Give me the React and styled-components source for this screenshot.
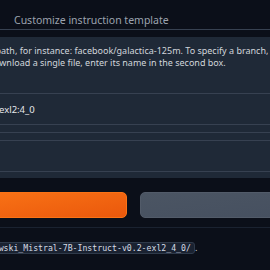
import React from 'react';
import styled, { createGlobalStyle } from 'styled-components';

const GlobalStyle = createGlobalStyle`
  html, body {
    margin: 0;
    padding: 0;
    background: #0b0f19;
  }
  body {
    font-family: "Noto Sans", "DejaVu Sans", sans-serif;
    overflow: hidden;
  }
`;

const Page = styled.div`
  width: 270px;
  height: 270px;
  overflow: hidden;
  background: #0b0f19;
`;

const TabBar = styled.div`
  height: 29px;
  display: flex;
  align-items: flex-end;
  border-bottom: 1px solid #374151;
`;

const Tab = styled.div`
  padding: 0 14px 2px;
  font-size: 10.5px;
  line-height: 14px;
  color: #9ca3af;
  white-space: nowrap;
`;

const Panel = styled.div`
  margin-top: 7px;
  height: 141px;
  box-sizing: border-box;
  padding: 8px 0 6px;
  background: #1f2937;
  display: flex;
  flex-direction: column;
`;

const Hint = styled.div`
  font-size: 9px;
  line-height: 12px;
  color: #d1d5db;
`;

const HintLine = styled.div`
  white-space: nowrap;
  margin-left: ${(p) => p.$shift || 0}px;
`;

const TextBox = styled.div`
  margin-top: ${(p) => p.$gap || 0}px;
  height: 32px;
  box-sizing: border-box;
  border: solid #374151;
  border-width: 1px 0;
  display: flex;
  align-items: center;
  font-size: 9.5px;
  color: #e5e7eb;
  white-space: nowrap;
`;

const Value = styled.span`
  margin-left: -1px;
`;

const Rule = styled.div`
  margin-top: ${(p) => p.$gap || 0}px;
  height: 1px;
  background: ${(p) => p.$color || '#374151'};
`;

const ButtonRow = styled.div`
  margin: 14px -20px 0 -23px;
  display: grid;
  grid-template-columns: 1fr 1fr;
  gap: 13px;
`;

const Button = styled.button`
  height: 26px;
  border-radius: 5px;
  border: 1px solid ${(p) => (p.$primary ? '#f97316' : '#525b69')};
  background: ${(p) =>
    p.$primary
      ? 'linear-gradient(to bottom right, #f97316, #ea580c)'
      : 'linear-gradient(to bottom right, #4b5563, #465060)'};
  padding: 0;
`;

const Note = styled.div`
  margin: 13px 0 0 -30px;
  display: flex;
  align-items: baseline;
  white-space: nowrap;
  font-size: 9px;
  color: #d1d5db;
`;

const Code = styled.code`
  display: inline-block;
  font-family: "DejaVu Sans Mono", "Liberation Mono", monospace;
  font-size: 8.2px;
  line-height: 10px;
  padding: 0 3px;
  border: 1px solid #2f3a4a;
  border-radius: 3px;
  background: #1a2231;
  color: #d6dce5;
`;

export default function App() {
  return (
    <Page>
      <GlobalStyle />
      <TabBar>
        <Tab>Customize instruction template</Tab>
      </TabBar>
      <Panel>
        <Hint>
          <HintLine $shift={-4.5}>
            path, for instance: facebook/galactica-125m. To specify a branch,
          </HintLine>
          <HintLine $shift={-11.5}>
            download a single file, enter its name in the second box.
          </HintLine>
        </Hint>
        <TextBox $gap={24}>
          <Value>exl2:4_0</Value>
        </TextBox>
        <Rule $gap={7} />
        <TextBox $gap={7} />
      </Panel>
      <ButtonRow>
        <Button $primary aria-label="Download" />
        <Button aria-label="Get file list" />
      </ButtonRow>
      <Rule $gap={9} $color="#1a2230" />
      <Note>
        <Code>bartowski_Mistral-7B-Instruct-v0.2-exl2_4_0/</Code>.
      </Note>
    </Page>
  );
}
